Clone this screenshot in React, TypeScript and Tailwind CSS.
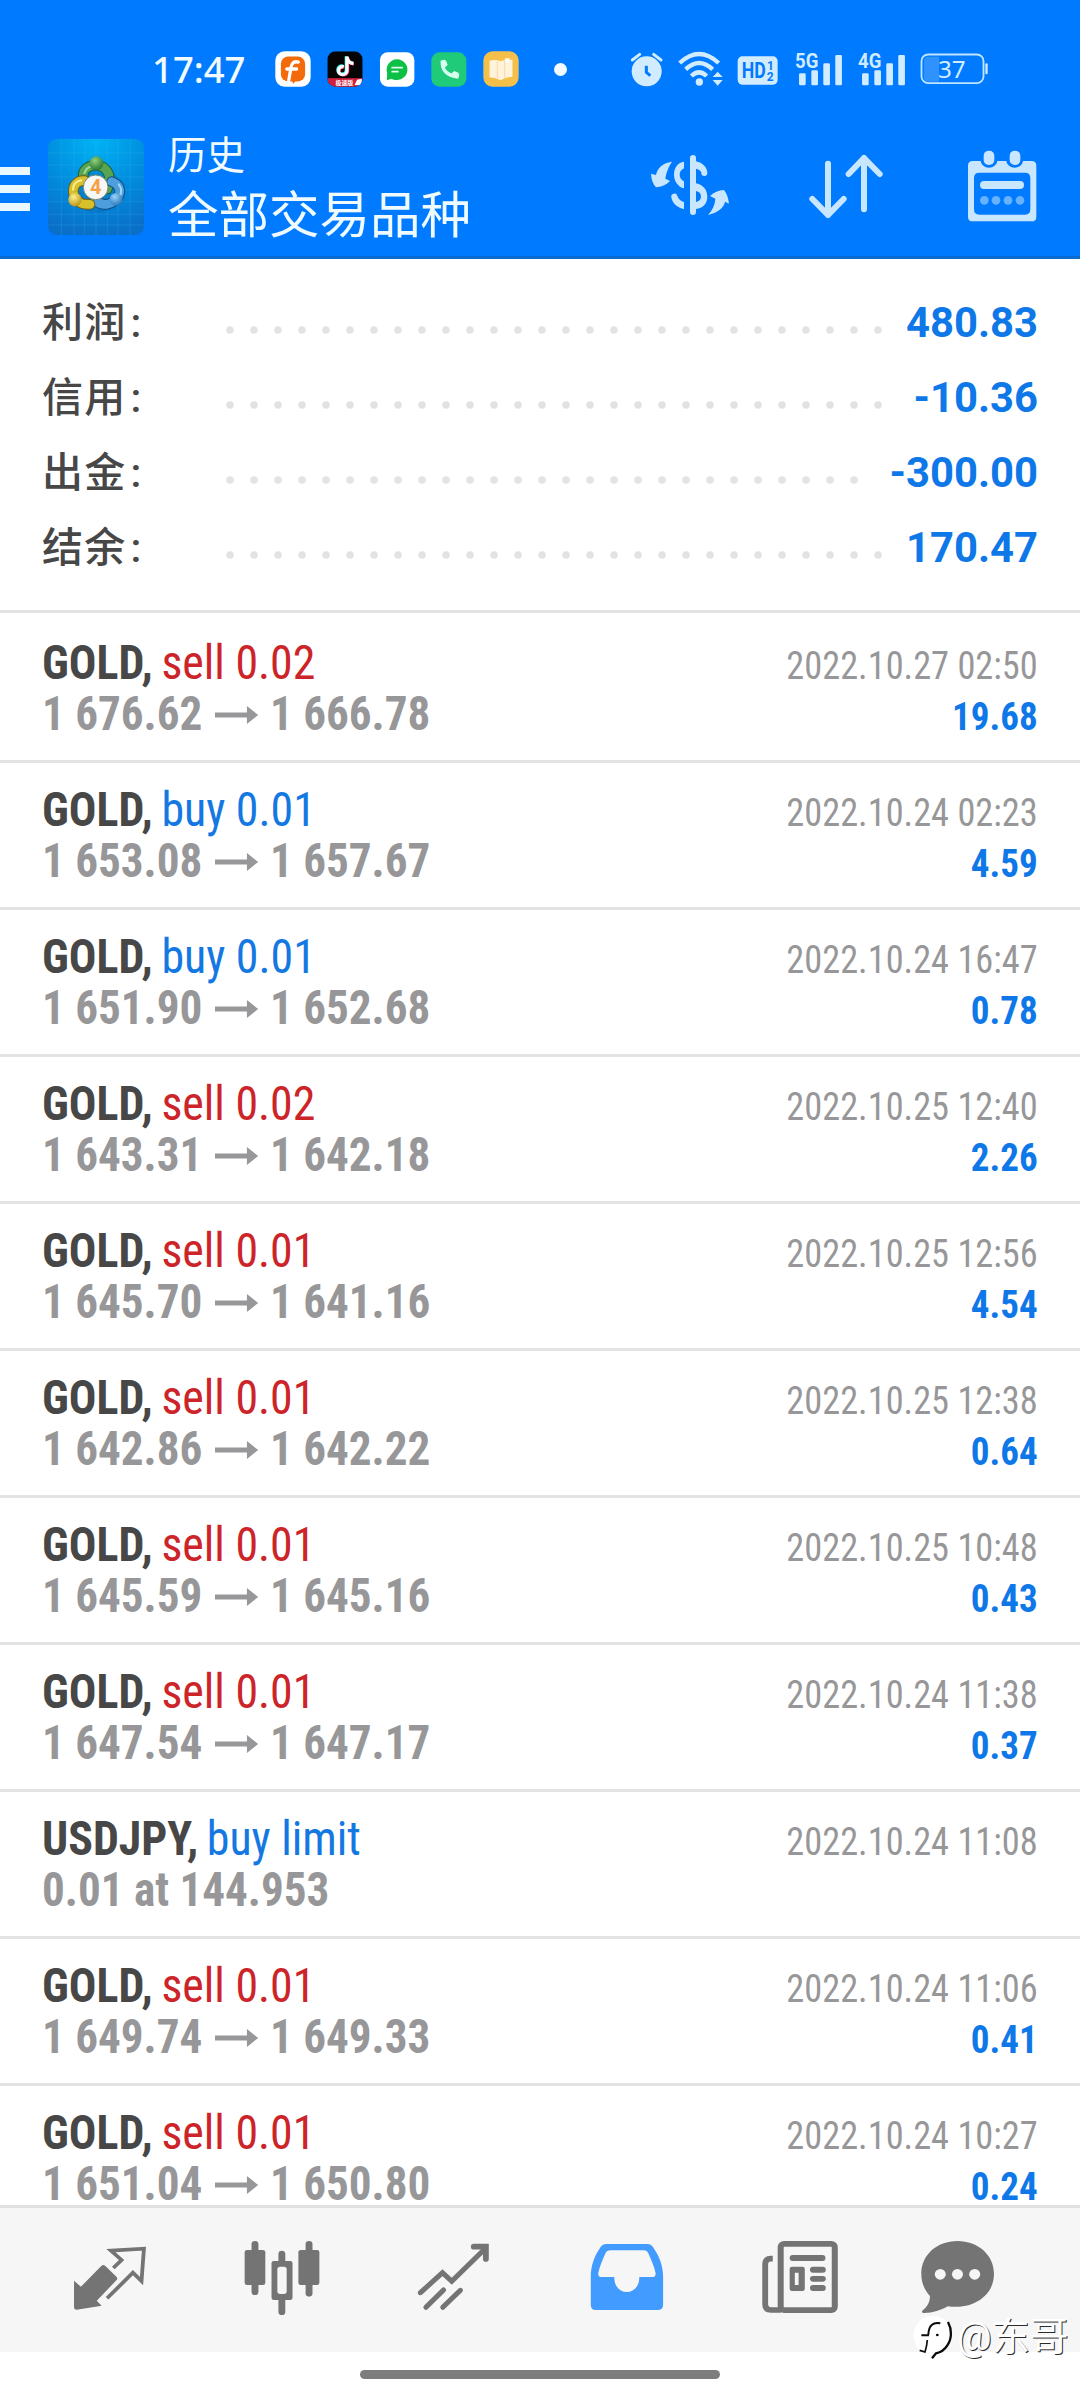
import { clsx } from "clsx";
import type { ReactNode } from "react";

interface ISummaryItem {
  label: string;
  value: string;
  leader: string;
}

interface IDeal {
  symbol: string;
  side: "buy" | "sell";
  action: string;
  open: string;
  close?: string;
  time: string;
  profit?: string;
}

const summary: ISummaryItem[] = [
  { label: "利润", value: "480.83", leader: "w-[672px]" },
  { label: "信用", value: "-10.36", leader: "w-[672px]" },
  { label: "出金", value: "-300.00", leader: "w-[648px]" },
  { label: "结余", value: "170.47", leader: "w-[672px]" },
];

const deals: IDeal[] = [
  { symbol: "GOLD", side: "sell", action: "sell 0.02", open: "1 676.62", close: "1 666.78", time: "2022.10.27 02:50", profit: "19.68" },
  { symbol: "GOLD", side: "buy", action: "buy 0.01", open: "1 653.08", close: "1 657.67", time: "2022.10.24 02:23", profit: "4.59" },
  { symbol: "GOLD", side: "buy", action: "buy 0.01", open: "1 651.90", close: "1 652.68", time: "2022.10.24 16:47", profit: "0.78" },
  { symbol: "GOLD", side: "sell", action: "sell 0.02", open: "1 643.31", close: "1 642.18", time: "2022.10.25 12:40", profit: "2.26" },
  { symbol: "GOLD", side: "sell", action: "sell 0.01", open: "1 645.70", close: "1 641.16", time: "2022.10.25 12:56", profit: "4.54" },
  { symbol: "GOLD", side: "sell", action: "sell 0.01", open: "1 642.86", close: "1 642.22", time: "2022.10.25 12:38", profit: "0.64" },
  { symbol: "GOLD", side: "sell", action: "sell 0.01", open: "1 645.59", close: "1 645.16", time: "2022.10.25 10:48", profit: "0.43" },
  { symbol: "GOLD", side: "sell", action: "sell 0.01", open: "1 647.54", close: "1 647.17", time: "2022.10.24 11:38", profit: "0.37" },
  { symbol: "USDJPY", side: "buy", action: "buy limit", open: "0.01 at 144.953", time: "2022.10.24 11:08" },
  { symbol: "GOLD", side: "sell", action: "sell 0.01", open: "1 649.74", close: "1 649.33", time: "2022.10.24 11:06", profit: "0.41" },
  { symbol: "GOLD", side: "sell", action: "sell 0.01", open: "1 651.04", close: "1 650.80", time: "2022.10.24 10:27", profit: "0.24" },
];

function AppBadges() {
  return (
    <div className="flex items-center gap-4">
      <svg viewBox="405 62 110 110" className="size-9">
        <rect x="406" y="63" width="108" height="108" rx="28" fill="#fff" />
        <rect x="423" y="79" width="74" height="76" rx="22" fill="#f26a0a" />
        <path d="M476 96c-12-4-20 3-22 15l-8 47M441 117h30" fill="none" stroke="#fff" strokeWidth="10" strokeLinecap="round" />
        <path d="M458 150l14-1-12 14z" fill="#f26a0a" />
      </svg>
      <svg viewBox="560 62 110 110" className="size-9">
        <defs>
          <clipPath id="tile">
            <rect x="561" y="63" width="108" height="108" rx="26" />
          </clipPath>
        </defs>
        <g clipPath="url(#tile)">
          <rect x="561" y="63" width="108" height="108" fill="#050505" />
          <rect x="561" y="145" width="108" height="27" fill="#d0213c" />
          <text x="586" y="166" fontFamily="Noto Sans CJK SC, sans-serif" fontWeight="700" fontSize="18" fill="#fff">极速版</text>
          <path d="M644 166l8-16 14-3v20z" fill="#fff" />
        </g>
        <g fill="none" strokeWidth="10">
          <path d="M619 78v42c0 16-26 16-26 0 0-9 8-14 16-12M619 79c2 13 9 19 20 20" stroke="#2af0ea" />
          <path d="M623 81v42c0 16-26 16-26 0 0-9 8-14 16-12M623 82c2 13 9 19 19 20" stroke="#fe2c55" />
          <path d="M621 79v43c0 16-26 16-26 0 0-9 8-14 16-12M621 80c2 13 9 19 20 20" stroke="#fff" />
        </g>
      </svg>
      <svg viewBox="716 62 110 110" className="size-9">
        <rect x="719" y="66" width="105" height="105" rx="24" fill="#fff" />
        <path d="M771 87a33 32 0 1 1-17 60l-14 4 1-22a33 32 0 0 1 30-42z" fill="#0cbf45" />
        <path d="M754 113h35M754 125h22" stroke="#e4fff0" strokeWidth="5" />
      </svg>
      <svg viewBox="872 62 110 110" className="size-9">
        <rect x="873" y="66" width="107" height="105" rx="26" fill="#1fcb79" />
        <path d="M901 92l10-3q6-1 8 5l4 10-9 9q7 13 20 18l9-8 11 5q6 3 4 9l-3 10q-55-5-54-55z" fill="#d6ffee" />
      </svg>
      <svg viewBox="1028 62 110 110" className="size-9">
        <rect x="1029" y="63" width="108" height="108" rx="28" fill="#f4c04a" />
        <path d="M1048 92q17-5 34 1 17-6 36-4v52q-18 1-36 10-18-9-34-9z" fill="#fff3dc" />
        <path d="M1072 91v54M1094 91v54" stroke="#f8dfae" strokeWidth="4" />
        <path d="M1094 85l16-1-8 16z" fill="#fff" />
      </svg>
    </div>
  );
}

function Signal({ label }: { label: string }) {
  return (
    <svg viewBox="585 62 142 104" className="h-[34.6px] w-[47.3px]">
      <text x="585" y="110" fontFamily="Roboto, sans-serif" fontWeight="700" fontSize="60" textLength="70" lengthAdjust="spacingAndGlyphs">
        {label}
      </text>
      <rect x="597" y="126" width="20" height="36" rx="4" />
      <rect x="634" y="117" width="20" height="45" rx="4" />
      <rect x="670" y="96" width="20" height="66" rx="4" />
      <rect x="706" y="71" width="20" height="91" rx="4" />
    </svg>
  );
}

function StatusBar() {
  return (
    <div className="flex h-[108px] items-center pt-[30px] pl-[152px]">
      <span className="w-[123px] font-['Noto_Sans',sans-serif] text-[36.500px] font-medium text-[#f2fbff]">17:47</span>
      <AppBadges />
      <span className="ml-[35px] size-[13px] rounded-full bg-[#f2fbff]" />
      <div className="ml-[63px] flex items-center fill-[#d2ecff]">
        <svg viewBox="88 62 101 110" className="h-[36.7px] w-[33.7px]">
          <circle cx="138" cy="123" r="45" />
          <path d="M95 89l22-17M181 89l-22-17" stroke="#d2ecff" strokeWidth="9" strokeLinecap="round" />
          <path d="M137 106v20l12 10" fill="none" stroke="#007aff" strokeWidth="9" />
        </svg>
        <svg viewBox="232 62 138 110" className="ml-[14px] h-[36.7px] w-[46px]">
          <g fill="none" stroke="#d2ecff" strokeWidth="13">
            <path d="M237 98q58-54 117 0M255 117q40-38 81 0M272 137q23-22 46 0" />
          </g>
          <circle cx="296" cy="155" r="11" />
          <path d="M336 140h30l-15-16zM336 149h30l-15 17z" />
        </svg>
        <svg viewBox="409 62 124 110" className="ml-[13px] h-[36.7px] w-[41.3px]">
          <rect x="411" y="78" width="120" height="85" rx="14" />
          <g fill="#007aff" fontFamily="Roboto, sans-serif" fontWeight="700">
            <text x="423" y="144" fontSize="66" textLength="72" lengthAdjust="spacingAndGlyphs">HD</text>
            <text x="499" y="118" fontSize="36">1</text>
            <text x="498" y="151" fontSize="36">2</text>
          </g>
        </svg>
        <div className="ml-[17px] flex gap-4">
          <Signal label="5G" />
          <Signal label="4G" />
        </div>
        <svg viewBox="960 66 206 102" className="ml-[14px] h-[34px] w-[68.7px]">
          <path d="M984 80h33v75h-33q-12 0-12-12v-51q0-12 12-12z" fill="#2f92ff" />
          <rect x="964.500" y="73.500" width="186" height="86" rx="20" fill="none" stroke="#bfe6ff" strokeWidth="5.500" />
          <rect x="1156" y="100" width="7" height="33" rx="3" />
          <text x="1014" y="143" fontFamily="Noto Sans, sans-serif" fontSize="70" textLength="83" lengthAdjust="spacingAndGlyphs">37</text>
        </svg>
      </div>
    </div>
  );
}

function AppLogo() {
  return (
    <svg viewBox="12 14 288 288" className="mt-[10px] ml-[18px] size-24">
      <defs>
        <radialGradient id="sky" cx="0.5" cy="0" r="1">
          <stop offset="0" stopColor="#00b4f5" />
          <stop offset="0.5" stopColor="#0090e0" />
          <stop offset="1" stopColor="#0a6fc8" />
        </radialGradient>
        <radialGradient id="green" cx="0.4" cy="0.3" r="0.8">
          <stop offset="0" stopColor="#8fd07e" />
          <stop offset="1" stopColor="#1d6a26" />
        </radialGradient>
        <radialGradient id="yellow" cx="0.4" cy="0.3" r="0.8">
          <stop offset="0" stopColor="#fff08a" />
          <stop offset="1" stopColor="#b38a0c" />
        </radialGradient>
        <radialGradient id="blue" cx="0.4" cy="0.3" r="0.8">
          <stop offset="0" stopColor="#9ad4fb" />
          <stop offset="1" stopColor="#1c6cb2" />
        </radialGradient>
      </defs>
      <rect x="12" y="14" width="288" height="288" rx="26" fill="url(#sky)" />
      <path
        d="M52 14v288M90 14v288M122 14v288M156 14v288M190 14v288M222 14v288M258 14v288M12 56h288M12 92h288M12 128h288M12 166h288M12 202h288M12 240h288M12 272h288"
        stroke="#45bdf2"
        strokeOpacity="0.3"
        strokeWidth="2"
      />
      <ellipse cx="160" cy="170" rx="84" ry="64" fill="#0a5a9a" opacity="0.25" />
      <g fill="none" strokeLinecap="round">
        <path d="M119 134C112 108 130 94 156 92c32 3 46 30 38 58l-4 14" stroke="#1f5f35" strokeWidth="32" />
        <path d="M119 134C112 108 130 94 156 92c32 3 46 30 38 58l-4 14" stroke="#57a552" strokeWidth="26" />
        <path d="M121 116c4-14 18-22 35-22" stroke="#a5d79a" strokeWidth="6" />
        <path d="M203 142c22 7 30 26 20 44-17 28-48 32-72 11" stroke="#124c86" strokeWidth="32" />
        <path d="M203 142c22 7 30 26 20 44-17 28-48 32-72 11" stroke="#4c9fdc" strokeWidth="26" />
        <path d="M224 150c10 12 10 24 2 36" stroke="#a8d6f6" strokeWidth="6" />
        <path d="M122 139c-22-2-35 14-34 34 2 26 23 39 50 37" stroke="#6f6114" strokeWidth="32" />
        <path d="M122 139c-22-2-35 14-34 34 2 26 23 39 50 37" stroke="#d8bf2c" strokeWidth="26" />
        <path d="M112 138c-16 3-25 14-25 28" stroke="#f8ec8c" strokeWidth="6" />
      </g>
      <circle cx="157" cy="87" r="21" fill="url(#green)" />
      <circle cx="93" cy="196" r="20" fill="url(#yellow)" />
      <circle cx="216" cy="195" r="19" fill="url(#blue)" />
      <circle cx="155" cy="159" r="37" fill="#f7f7f5" stroke="#718775" strokeWidth="3" />
      <text x="155" y="180" textAnchor="middle" fontFamily="Roboto, sans-serif" fontWeight="700" fontSize="60" fill="#f5a14a">4</text>
    </svg>
  );
}

function Toolbar() {
  return (
    <div className="flex h-[148px] items-center pr-[38px]">
      <div className="mt-[14px] flex flex-col gap-[10px]">
        <span className="h-2 w-[30px] bg-[#e9f8ff]" />
        <span className="h-2 w-[30px] bg-[#e9f8ff]" />
        <span className="h-2 w-[30px] bg-[#e9f8ff]" />
      </div>
      <AppLogo />
      <div className="mt-[10px] ml-6 flex flex-col text-[#f0fbff]">
        <span className="text-[38.500px] leading-[56px]">历史</span>
        <span className="pt-[2px] text-[50.500px] leading-[60px]">全部交易品种</span>
      </div>
      <div className="ml-auto flex gap-[76px] fill-[#c9e6ff]">
        <svg viewBox="150 96 240 240" className="size-20">
          <rect x="270" y="135" width="18" height="180" rx="9" />
          <path d="M252 155c-20 3-30 20-30 38 0 22 13 39 30 42v-21c-8-4-13-11-13-20s5-15 13-19z" />
          <path d="M288 154c19 4 34 18 34 35a9 9 0 0 1-18 0c0-6-6-11-16-13z" />
          <path d="M288 220c22 5 34 20 34 40 0 22-14 34-34 37v-21c9-2 15-8 15-16 0-10-6-15-15-17z" />
          <path d="M252 297c-20-3-35-17-38-35a9 9 0 0 1 18-4c4 10 11 16 20 18z" />
          <path d="M216 155c-31 5-44 20-48 40l-15-4c1 18 6 31 15 41 17-1 30-7 42-19l-14-7c2-16 9-36 20-51z" />
          <path d="M324 315c28-7 47-20 51-40l12 6c-2-18-7-31-15-41-17 1-30 7-42 18l16 8c-1 19-9 35-22 49z" />
        </svg>
        <svg viewBox="618 96 240 240" className="size-20">
          <g fill="none" stroke="#c9e6ff" strokeWidth="18" strokeLinecap="round" strokeLinejoin="round">
            <path d="M684 161v154M637 267l47 48 47-48" />
            <path d="M792 298V144M746 192l46-48 47 48" />
          </g>
        </svg>
        <svg viewBox="1086 96 240 240" className="size-20">
          <path
            fillRule="evenodd"
            d="M1118 153h24c2 12 12 20 25 20s23-8 25-20h27c2 12 12 20 25 20s23-8 25-20h26q14 0 14 14v153q0 14-14 14h-177q-14 0-14-14V167q0-14 14-14zM1138 188q-16 0-16 16v94q0 16 16 16h137q16 0 16-16v-94q0-16-16-16z"
          />
          <rect x="1151" y="122" width="32" height="43" rx="15" />
          <rect x="1229" y="122" width="32" height="43" rx="15" />
          <rect x="1140" y="213" width="132" height="24" rx="12" />
          <g fill="#66b2ff">
            <circle cx="1153" cy="271" r="13" />
            <circle cx="1188" cy="271" r="13" />
            <circle cx="1224" cy="271" r="13" />
            <circle cx="1260" cy="271" r="13" />
          </g>
        </svg>
      </div>
    </div>
  );
}

function Summary() {
  return (
    <section className="border-b-[3px] border-[#e3e3e3] px-[42px] pt-[26px] pb-[25px]">
      {summary.map(({ label, value, leader }) => (
        <div key={label} className="flex h-[75px] items-center">
          <p className="mt-[2px] flex w-44 text-[41px] leading-[75px] font-medium tracking-[0.03em] text-[#474747]">
            {label}
            <span className="ml-1">:</span>
          </p>
          <span
            className={clsx(
              "h-[75px] bg-[radial-gradient(circle_at_12px_45px,#e2e2e2_3px,transparent_4.500px)] bg-size-[24px_75px]",
              leader,
            )}
          />
          <span className="ml-auto text-[41.800px] leading-[75px] font-bold text-[#0f78e8]">{value}</span>
        </div>
      ))}
    </section>
  );
}

function Deal({ symbol, side, action, open, close, time, profit }: IDeal) {
  return (
    <li className="flex h-[147px] justify-between border-b-[3px] border-[#e3e3e3] px-[42px] pt-[21px] font-['Roboto_Condensed',sans-serif]">
      <div className="text-5xl leading-[51px] whitespace-nowrap">
        <p className="flex origin-left scale-x-[0.955] gap-[9px] text-[#474747]">
          <span className="font-bold">{symbol},</span>
          <span className={side === "sell" ? "text-[#cc2429]" : "text-[#1478e3]"}>{action}</span>
        </p>
        <p className="flex origin-left scale-x-[0.94] items-baseline font-bold text-[#979799]">
          {open}
          {close && (
            <>
              <svg viewBox="0 0 46 24" className="mx-[13px] h-6 w-[46px] fill-current">
                <path d="M0 6.500h34V0l12 9-12 9v-6.500H0z" />
              </svg>
              {close}
            </>
          )}
        </p>
      </div>
      <div className="pt-px text-right text-[39px] leading-[51px] whitespace-nowrap">
        <p className="origin-right scale-x-[0.932] pt-[3px] text-[#979799]">{time}</p>
        <p className="-mt-[3px] origin-right scale-x-[0.95] pt-[3px] font-bold text-[#0f78e8]">{profit}</p>
      </div>
    </li>
  );
}

function TabIcon({ viewBox, children }: { viewBox: string; children: ReactNode }) {
  return (
    <div className="flex w-[172.500px] shrink-0 justify-center last:w-36">
      <svg viewBox={viewBox} preserveAspectRatio="none" className="size-20 fill-[#747474]">
        {children}
      </svg>
    </div>
  );
}

function TabBar() {
  return (
    <nav className="flex h-[147px] items-center border-t-[3px] border-[#e1e1e1] bg-[#f6f6f6] pl-[23.750px]">
      <TabIcon viewBox="203.300 150 232.300 240">
        <path d="M215 272l20 18 59-62q6-6 12 0l32 32q5 6 0 11l-57 61 14 15-72 12q-8 1-8-7z" />
        <path d="M329 234l24-24-31-28 96-6-7 97-25-25-75 77" fill="none" stroke="#747474" strokeWidth="11" />
      </TabIcon>
      <TabIcon viewBox="704.200 150 232.300 240">
        <rect x="729" y="153" width="20" height="162" rx="10" />
        <rect x="709" y="180" width="60" height="105" rx="7" />
        <rect x="886" y="153" width="20" height="167" rx="10" />
        <rect x="865" y="180" width="61" height="105" rx="7" />
        <rect x="807" y="182" width="20" height="193" rx="10" />
        <rect x="787" y="213" width="61" height="117" rx="7" />
        <rect x="804" y="230" width="27" height="82" rx="8" fill="#f6f6f6" />
      </TabIcon>
      <TabIcon viewBox="1205.200 150 232.300 240">
        <g fill="none" stroke="#747474" strokeWidth="15" strokeLinecap="round">
          <path d="M1221 308l64-60 27 26 92-93" />
          <path d="M1376 170h35v37" strokeWidth="17" />
          <path d="M1237 352l51-52M1286 352l51-51" />
        </g>
      </TabIcon>
      <TabIcon viewBox="137.900 150 232.300 240">
        <path
          fill="#429cff"
          fillRule="evenodd"
          d="M190 162h122q9 0 14 8c18 27 30 55 30 90v84q0 16-16 16H161q-15 0-15-16v-84c0-35 11-63 29-90q5-8 15-8zM204 181q-12 0-16 10c-8 19-17 39-20 57q-2 13 9 13h37c0 60 73 60 73 0h38q11 0 9-13c-4-19-13-39-21-58q-3-9-14-9z"
        />
      </TabIcon>
      <TabIcon viewBox="638.900 150 232.300 240">
        <path d="M676 206h-5q-17 0-17 17v120q0 17 17 17h29" fill="none" stroke="#747474" strokeWidth="17" />
        <rect x="699" y="161.500" width="157" height="199" rx="10" fill="none" stroke="#747474" strokeWidth="17.500" />
        <rect x="725" y="195" width="104" height="18" rx="9" />
        <path fillRule="evenodd" d="M732 230h30q7 0 7 7v59q0 7-7 7h-30q-7 0-7-7v-59q0-7 7-7zM740 248v37h11v-37z" />
        <rect x="784" y="230" width="46" height="18" rx="9" />
        <rect x="784" y="258" width="46" height="17" rx="9" />
        <rect x="784" y="285" width="46" height="18" rx="9" />
      </TabIcon>
      <TabIcon viewBox="1098.400 150 232.300 240">
        <path d="M1213 153c60 0 106 42 106 98 0 68-62 108-134 98-21 12-43 20-68 20-7 0-9-4-5-8 16-13 21-27 21-43-15-17-25-39-25-67 0-56 45-98 105-98z" />
        <circle cx="1163" cy="253" r="16" fill="#f6f6f6" />
        <circle cx="1213" cy="253" r="16" fill="#f6f6f6" />
        <circle cx="1263" cy="253" r="16" fill="#f6f6f6" />
      </TabIcon>
    </nav>
  );
}

function Watermark() {
  return (
    <div className="absolute top-[2312px] left-[911px] flex items-center">
      <svg viewBox="36 20 132 150" className="h-[50px] w-11">
        <path d="M44 90c0-34 26-58 58-58s56 22 56 58c0 26-16 46-40 54l-22 18-4-14c-30-4-48-28-48-58z" fill="#fff" />
        <g fill="none" stroke="#0b0b0b">
          <path d="M124 54c-22-4-35 6-36 34M67 90h23" strokeWidth="6" />
          <path d="M85 104c-1 12-3 24-7 36l-16-5" strokeWidth="5" />
          <path d="M147 50c12 22 12 50-2 70-8 13-20 21-34 24l-12 15" strokeWidth="7" />
        </g>
        <circle cx="115" cy="89" r="4" />
      </svg>
      <span className="ml-[2px] text-[38.500px] leading-[50px] whitespace-nowrap text-white [text-shadow:1px_1px_0_#2a2a2a]">@东哥</span>
    </div>
  );
}

export default function App() {
  return (
    <div className="relative flex h-[2400px] w-[1080px] flex-col overflow-hidden bg-white font-[Roboto,'Noto_Sans_CJK_SC',sans-serif]">
      <header className="h-[259px] shrink-0 border-b-[3px] border-[#0b6bd0] bg-[#007aff]">
        <StatusBar />
        <Toolbar />
      </header>
      <Summary />
      <ul className="min-h-0 flex-1 overflow-hidden pt-[3px]">
        {deals.map((deal) => (
          <Deal key={deal.time} {...deal} />
        ))}
      </ul>
      <TabBar />
      <div className="flex h-12 shrink-0 items-center justify-center pb-[3px]">
        <span className="h-[9px] w-[360px] rounded-full bg-[#7d7d7d]" />
      </div>
      <Watermark />
    </div>
  );
}
